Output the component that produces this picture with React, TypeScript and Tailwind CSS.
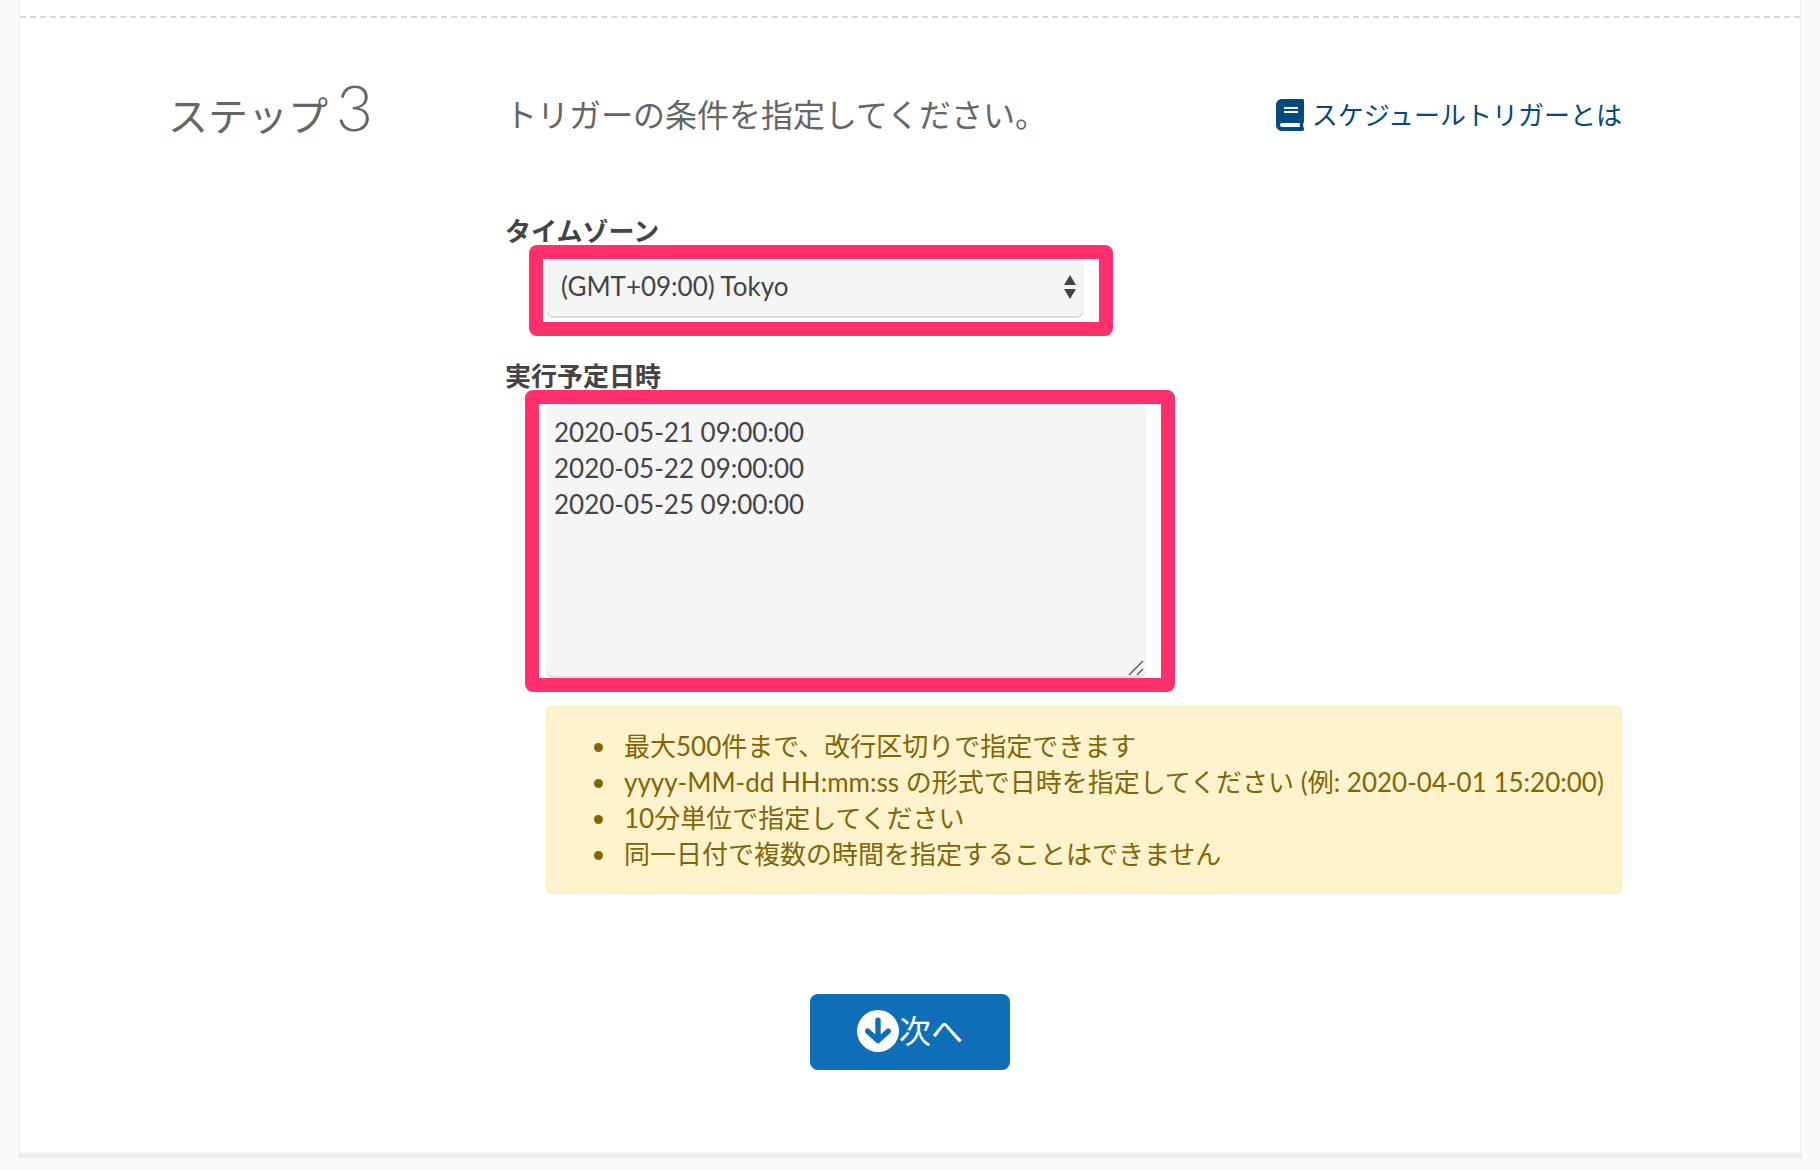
import React from 'react';
import { FaBook } from 'react-icons/fa';

const timezones = ['(GMT+09:00) Tokyo'];

const schedule = ['2020-05-21 09:00:00', '2020-05-22 09:00:00', '2020-05-25 09:00:00'];

const notes = [
  '最大500件まで、改行区切りで指定できます',
  'yyyy-MM-dd HH:mm:ss の形式で日時を指定してください (例: 2020-04-01 15:20:00)',
  '10分単位で指定してください',
  '同一日付で複数の時間を指定することはできません',
];

const SortArrows: React.FC = () => (
  <svg
    className="pointer-events-none absolute right-2 top-4 h-6 w-3"
    viewBox="0 0 12 24"
    fill="#444"
    aria-hidden="true"
  >
    <path d="M6 0 12 10H0z" />
    <path d="M0 14H12L6 24z" />
  </svg>
);

const ResizeGrip: React.FC = () => (
  <svg
    className="pointer-events-none absolute bottom-0 right-0.5 h-4 w-4"
    viewBox="0 0 16 16"
    stroke="#555"
    strokeWidth="1.4"
    aria-hidden="true"
  >
    <path d="M1 15 15 1M9 15 15 9" />
  </svg>
);

const ArrowDownCircle: React.FC = () => (
  <svg className="h-[42px] w-[42px]" viewBox="0 0 42 42" fill="none" aria-hidden="true">
    <circle cx="21" cy="21" r="21" fill="#fff" />
    <path
      d="M21 10.3V29.5M10.8 21.2 21 30.6 31.2 21.2"
      stroke="#0e6eb8"
      strokeWidth="5.4"
      strokeLinecap="round"
      strokeLinejoin="round"
    />
  </svg>
);

const StepHeader: React.FC = () => (
  <header className="flex h-[78px] items-center">
    <h2 className="w-[337px] shrink-0 self-start text-[40px] leading-[62px]">
      ステップ<span className="ml-2 text-[64px] font-light">3</span>
    </h2>
    <p className="flex-1 text-[32px] leading-[36px]">トリガーの条件を指定してください。</p>
    <a href="#schedule-trigger" className="flex items-center gap-2 leading-[36px] text-[#044a80]">
      <FaBook className="h-8 w-7" />
      スケジュールトリガーとは
    </a>
  </header>
);

const TriggerForm: React.FC = () => (
  <div className="ml-[337px] text-[#444]">
    <label htmlFor="timezone" className="block font-bold leading-7">
      タイムゾーン
    </label>
    <div className="ml-6 w-fit rounded-lg border-[14px] border-[#ff306b] pb-1.5 pl-[3px] pr-[15px]">
      <div className="relative">
        <select
          id="timezone"
          className="block h-[57px] w-[538px] appearance-none rounded-lg bg-[#f5f5f5] pb-0.5 pl-[15px] shadow-[0_2px_0_#dcdcdc]"
        >
          {timezones.map((zone) => (
            <option key={zone}>{zone}</option>
          ))}
        </select>
        <SortArrows />
      </div>
    </div>

    <label htmlFor="schedule" className="mt-[26px] block font-bold leading-7">
      実行予定日時
    </label>
    <div className="ml-5 w-fit rounded-lg border-[14px] border-[#ff306b] pb-0.5 pl-[7px] pr-[15px]">
      <div className="relative">
        <textarea
          id="schedule"
          className="block h-[272px] w-[600px] resize-none rounded-lg bg-[#f5f5f5] px-2 pt-2.5 leading-[36px] shadow-[0_2px_0_#dcdcdc]"
          defaultValue={schedule.join('\n')}
        />
        <ResizeGrip />
      </div>
    </div>

    <ul className="ml-[41px] mt-3.5 list-disc rounded-md border-2 border-[#ffeeba] bg-[#fff3cd] py-5 pl-[70px] pr-1 leading-[36px] text-[#856404]">
      {notes.map((note) => (
        <li key={note} className="pl-1.5">
          {note}
        </li>
      ))}
    </ul>
  </div>
);

const App: React.FC = () => {
  return (
    <div className="min-h-screen bg-[#fafafa] px-[18px] pb-3 font-['Lato','Noto_Sans_CJK_JP',sans-serif] text-[26px] text-[#666]">
      <main className="border-x-2 border-[#f2f2f2] bg-white pt-4 shadow-[0_4px_0_#ebebeb]">
        <section className="border-b-2 border-t-2 border-b-[#f2f2f2] border-t-[#d8d8d8] [border-top-style:dashed] pb-[82px] pt-[58px]">
          <div className="pl-[148px] pr-[178px]">
            <StepHeader />
            <div className="mt-[63px]">
              <TriggerForm />
            </div>
          </div>
          <div className="mt-[100px] flex justify-center">
            <button
              type="button"
              className="flex h-[76px] w-[200px] items-center justify-center rounded-lg bg-[#0e6eb8] pb-0.5 text-[32px] text-white"
            >
              <ArrowDownCircle />
              次へ
            </button>
          </div>
        </section>
      </main>
    </div>
  );
};

export default App;
